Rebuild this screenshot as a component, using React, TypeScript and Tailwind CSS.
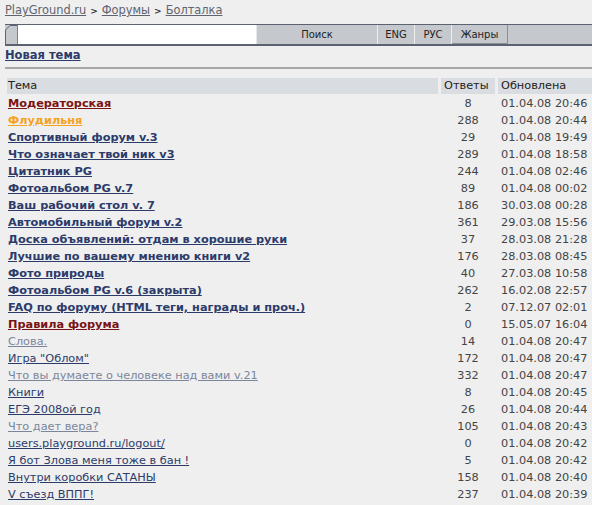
import React from "react";

type Row = { t: string; k: "red" | "orange" | "bold" | "link" | "light"; n: string; d: string };

const rows: Row[] = [
  { t: "Модераторская", k: "red", n: "8", d: "01.04.08 20:46" },
  { t: "Флудильня", k: "orange", n: "288", d: "01.04.08 20:44" },
  { t: "Спортивный форум v.3", k: "bold", n: "29", d: "01.04.08 19:49" },
  { t: "Что означает твой ник v3", k: "bold", n: "289", d: "01.04.08 18:58" },
  { t: "Цитатник PG", k: "bold", n: "244", d: "01.04.08 02:46" },
  { t: "Фотоальбом PG v.7", k: "bold", n: "89", d: "01.04.08 00:02" },
  { t: "Ваш рабочий стол v. 7", k: "bold", n: "186", d: "30.03.08 00:28" },
  { t: "Автомобильный форум v.2", k: "bold", n: "361", d: "29.03.08 15:56" },
  { t: "Доска объявлений: отдам в хорошие руки", k: "bold", n: "37", d: "28.03.08 21:28" },
  { t: "Лучшие по вашему мнению книги v2", k: "bold", n: "176", d: "28.03.08 08:45" },
  { t: "Фото природы", k: "bold", n: "40", d: "27.03.08 10:58" },
  { t: "Фотоальбом PG v.6 (закрыта)", k: "bold", n: "262", d: "16.02.08 22:57" },
  { t: "FAQ по форуму (HTML теги, награды и проч.)", k: "bold", n: "2", d: "07.12.07 02:01" },
  { t: "Правила форума", k: "red", n: "0", d: "15.05.07 16:04" },
  { t: "Слова.", k: "light", n: "14", d: "01.04.08 20:47" },
  { t: "Игра \"Облом\"", k: "link", n: "172", d: "01.04.08 20:47" },
  { t: "Что вы думаете о человеке над вами v.21", k: "light", n: "332", d: "01.04.08 20:47" },
  { t: "Книги", k: "link", n: "8", d: "01.04.08 20:45" },
  { t: "ЕГЭ 2008ой год", k: "link", n: "26", d: "01.04.08 20:44" },
  { t: "Что дает вера?", k: "light", n: "105", d: "01.04.08 20:43" },
  { t: "users.playground.ru/logout/", k: "link", n: "0", d: "01.04.08 20:42" },
  { t: "Я бот Злова меня тоже в бан !", k: "link", n: "5", d: "01.04.08 20:42" },
  { t: "Внутри коробки САТАНЫ", k: "link", n: "158", d: "01.04.08 20:40" },
  { t: "V съезд ВППГ!", k: "link", n: "237", d: "01.04.08 20:39" },
];

function titleClass(k: Row["k"]) {
  switch (k) {
    case "red":
      return "font-bold text-[#7a1414]";
    case "orange":
      return "font-bold text-[#f5a21e]";
    case "bold":
      return "font-bold text-[#2c3b6a]";
    case "link":
      return "text-[#2c3b6a]";
    default:
      return "text-[#7b869c]";
  }
}

export default function App() {
  return (
    <div className="min-h-[505px] w-[592px] overflow-hidden bg-[#efefef] font-['DejaVu_Sans',sans-serif] text-[#333]">
      {/* breadcrumb */}
      <div className="h-[24px] whitespace-nowrap pl-[5px] pt-[3px] text-[11.4px] leading-[14px] text-[#606470]">
        <a className="underline">PlayGround.ru</a>
        <span className="mx-[4px] text-[9px] font-bold text-[#333]">&gt;</span>
        <a className="underline">Форумы</a>
        <span className="mx-[4px] text-[9px] font-bold text-[#333]">&gt;</span>
        <a className="underline">Болталка</a>
      </div>

      {/* search bar */}
      <div className="ml-[5px] flex h-[22px] border-b-[2px] border-t border-[#5c6270] bg-[#c5c9cd]">
        <svg width="12" height="19" viewBox="0 0 12 19" className="block shrink-0">
          <polygon points="0,5 5,0 12,0 12,19 0,19" fill="#c5c9cd" />
          <polyline points="0.5,19 0.5,5 5,0.5 12,0.5" fill="none" stroke="#5c6270" strokeWidth="1" />
        </svg>
        <div className="h-[19px] w-[240px] border-l border-[#7a808a] border-r border-r-[#e8e8e8] bg-white" />
        <div className="flex w-[121px] items-center justify-center border-r border-[#eeeeee] bg-[#c5c9cd] text-[10px] text-[#222]">Поиск</div>
        <div className="flex w-[37px] items-center justify-center border-r border-[#eeeeee] bg-[#c5c9cd] text-[10px] text-[#222]">ENG</div>
        <div className="flex w-[37px] items-center justify-center border-r border-[#eeeeee] bg-[#c5c9cd] text-[10px] text-[#222]">РУС</div>
        <div className="flex h-[19px] w-[56px] items-center justify-center border-b border-r border-[#8a8e94] bg-[#c5c9cd] text-[10px] text-[#222]">Жанры</div>
        <div className="flex-1 bg-[#c5c9cd]" />
      </div>

      {/* new topic */}
      <div className="h-[19px] pl-[5px] pt-[2px] text-[11.5px] font-bold leading-[14px] text-[#2c3b6a]">
        <a className="underline">Новая тема</a>
      </div>

      <div className="ml-[5px] mt-[2px] h-[2px] bg-[#a8a8a8]" />

      {/* table */}
      <div className="ml-[7px] mt-[9px] grid grid-cols-[431px_54px_100px] gap-x-[3px] text-[11.3px] leading-[17px]">
        <div className="h-[16px] bg-[#d9dce0] pl-[1px] leading-[16px] text-[#222]">Тема</div>
        <div className="h-[16px] bg-[#d9dce0] pl-[3px] leading-[16px] text-[#222]">Ответы</div>
        <div className="h-[16px] bg-[#d9dce0] pl-[3px] leading-[16px] text-[#222]">Обновлена</div>
        {rows.map((r, i) => (
          <React.Fragment key={i}>
            <div className="h-[17px] truncate pl-[1px] pt-[1px]">
              <a className={"underline " + titleClass(r.k)}>{r.t}</a>
            </div>
            <div className="h-[17px] pt-[1px] text-center text-[#444]">{r.n}</div>
            <div className="h-[17px] whitespace-nowrap pl-[3px] pt-[1px] text-[#444]">{r.d}</div>
          </React.Fragment>
        ))}
      </div>
    </div>
  );
}
